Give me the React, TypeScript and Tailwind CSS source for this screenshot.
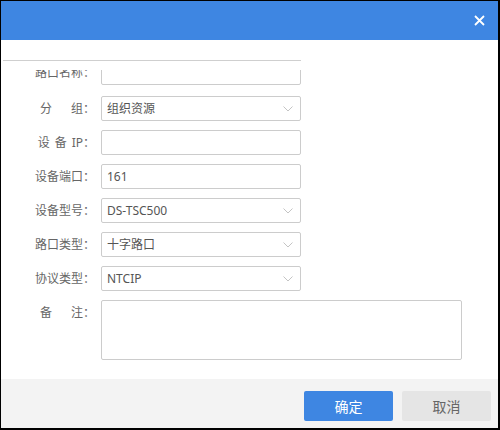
import type { ReactNode } from "react";

const font = { fontFamily: '"Noto Sans", "Noto Sans CJK SC", sans-serif' };

function Chevron() {
  return (
    <svg width="10" height="6" viewBox="0 0 10 6" className="shrink-0">
      <polyline points="0.5,0.5 5,5 9.5,0.5" fill="none" stroke="#c4c4c4" strokeWidth="1" />
    </svg>
  );
}

function Row({ label, children, first }: { label: ReactNode; children: ReactNode; first?: boolean }) {
  return (
    <div className="relative flex items-start">
      <div className="w-[100px] shrink-0 pr-[6px] h-[25px] leading-[25px] text-right text-[12px] text-[#666] whitespace-nowrap">
        {label}
      </div>
      {children}
      {first && (
        <div className="absolute top-0 left-[2px] w-[298px] h-[10px] bg-white border-t border-[#cfcfcf]" />
      )}
    </div>
  );
}

function Input({ value }: { value?: string }) {
  return (
    <div className="w-[200px] h-[25px] border border-[#ccc] rounded-[2px] pl-[5px] leading-[23px] text-[12px] text-[#555]">
      {value}
    </div>
  );
}

function Select({ value }: { value: string }) {
  return (
    <div className="w-[200px] h-[25px] border border-[#ccc] rounded-[2px] pl-[5px] pr-[7px] flex items-center justify-between text-[12px] text-[#555]">
      <span className="leading-[23px]">{value}</span>
      <Chevron />
    </div>
  );
}

export default function App() {
  return (
    <div style={font} className="w-[500px] h-[430px] bg-white border-l border-t border-r-2 border-b-2 border-black flex flex-col">
      <div className="h-[39px] shrink-0 bg-[#3e86e2] flex items-center justify-end pr-[13px]">
        <svg width="11" height="11" viewBox="0 0 11 11">
          <path d="M1 1 L10 10 M10 1 L1 10" stroke="#fff" strokeWidth="1.8" fill="none" />
        </svg>
      </div>

      <div className="flex-1 bg-white pt-[20px] flex flex-col">
        <Row first label="路口名称：">
          <Input />
        </Row>
        <div className="mt-[11px] flex flex-col gap-[9px]">
          <Row
            label={
              <>
                分<span className="inline-block w-[19px]" />组：
              </>
            }
          >
            <Select value="组织资源" />
          </Row>
          <Row
            label={
              <>
                设<span className="inline-block w-[5px]" />备<span className="inline-block w-[5px]" />IP：
              </>
            }
          >
            <Input />
          </Row>
          <Row label="设备端口：">
            <Input value="161" />
          </Row>
          <Row label="设备型号：">
            <Select value="DS-TSC500" />
          </Row>
          <Row label="路口类型：">
            <Select value="十字路口" />
          </Row>
          <Row label="协议类型：">
            <Select value="NTCIP" />
          </Row>
          <Row
            label={
              <>
                备<span className="inline-block w-[19px]" />注：
              </>
            }
          >
            <div className="w-[361px] h-[60px] border border-[#ccc] rounded-[2px]" />
          </Row>
        </div>
      </div>

      <div className="h-[49px] shrink-0 bg-[#f3f3f3] flex justify-end items-start pt-[12px] pr-[7px] gap-[9px]">
        <button className="w-[89px] h-[30px] rounded-[2px] bg-[#3e86e2] text-white text-[14px]">确定</button>
        <button className="w-[89px] h-[30px] rounded-[2px] bg-[#e5e5e5] text-[#666] text-[14px]">取消</button>
      </div>
    </div>
  );
}
